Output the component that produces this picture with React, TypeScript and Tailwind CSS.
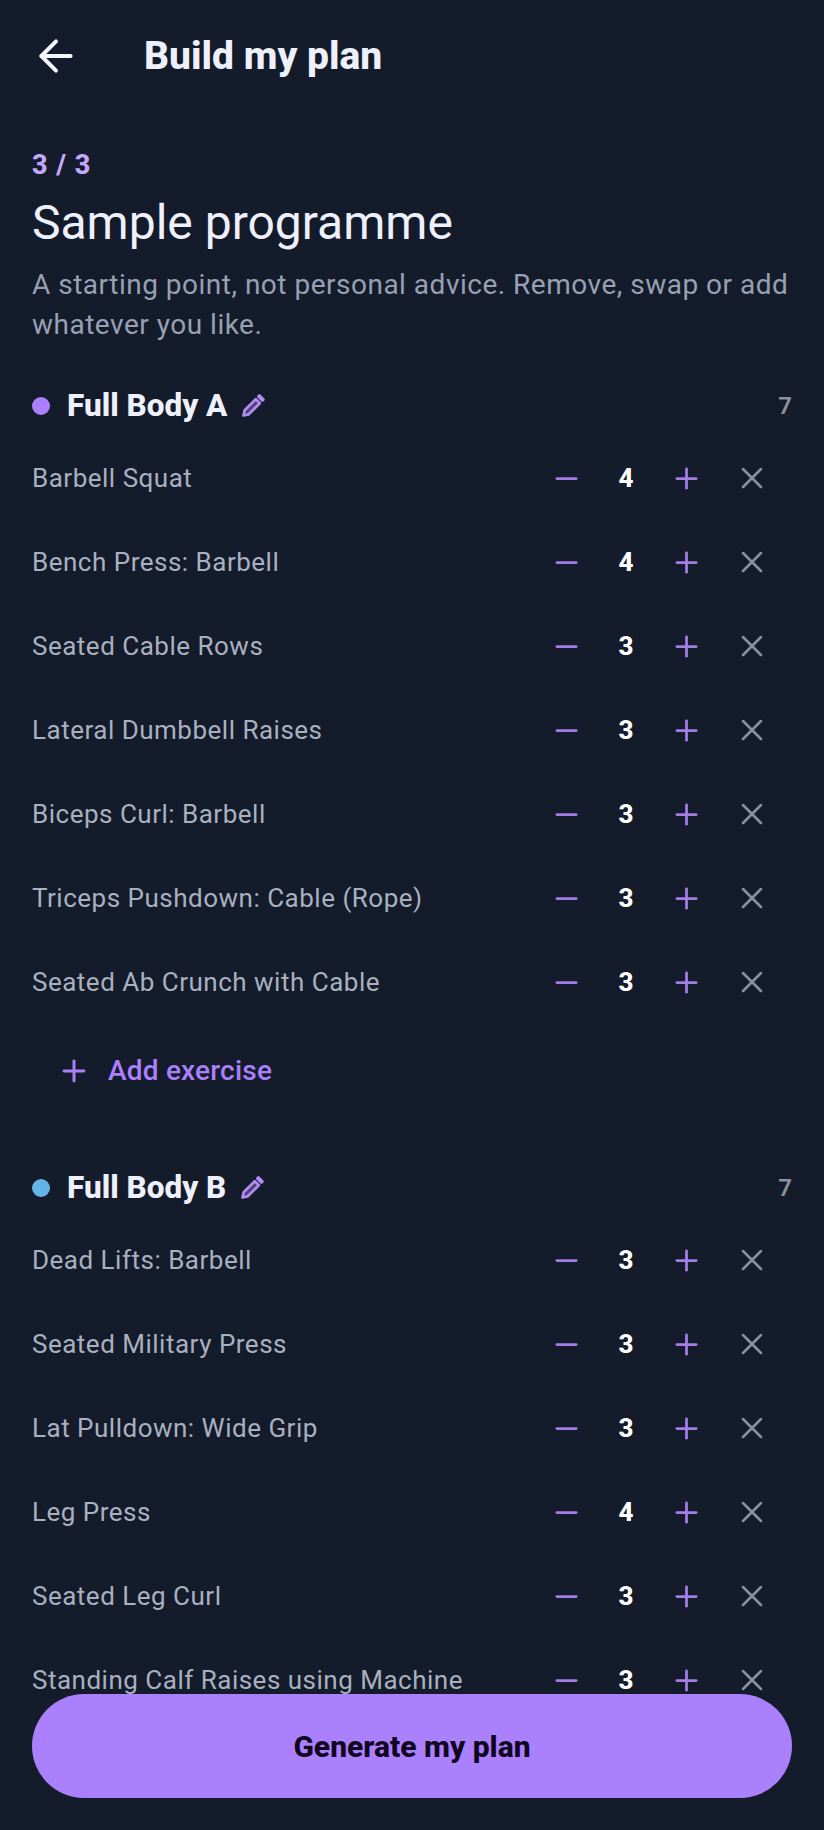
import { ArrowLeft, Minus, Plus, X } from 'lucide-react';

interface Exercise {
  name: string;
  sets: number;
}

interface Day {
  name: string;
  dot: string;
  exercises: Exercise[];
}

const days: Day[] = [
  {
    name: 'Full Body A',
    dot: 'bg-[#ab80fc]',
    exercises: [
      { name: 'Barbell Squat', sets: 4 },
      { name: 'Bench Press: Barbell', sets: 4 },
      { name: 'Seated Cable Rows', sets: 3 },
      { name: 'Lateral Dumbbell Raises', sets: 3 },
      { name: 'Biceps Curl: Barbell', sets: 3 },
      { name: 'Triceps Pushdown: Cable (Rope)', sets: 3 },
      { name: 'Seated Ab Crunch with Cable', sets: 3 },
    ],
  },
  {
    name: 'Full Body B',
    dot: 'bg-[#64b5e6]',
    exercises: [
      { name: 'Dead Lifts: Barbell', sets: 3 },
      { name: 'Seated Military Press', sets: 3 },
      { name: 'Lat Pulldown: Wide Grip', sets: 3 },
      { name: 'Leg Press', sets: 4 },
      { name: 'Seated Leg Curl', sets: 3 },
      { name: 'Standing Calf Raises using Machine', sets: 3 },
    ],
  },
];

const PencilIcon = () => (
  <svg width="26" height="26" viewBox="0 0 26 26" fill="#b08bf0" fillOpacity="0.35" stroke="#b08bf0" strokeWidth="2.8" strokeLinejoin="round" className="ml-[13px]">
    <path d="M3.5 22.5l1.2-5.2L15.8 6.2l4 4L8.7 21.3z" />
    <path d="M18.4 3.6l1-1 4 4-1 1z" fillOpacity="1" />
  </svg>
);

const ExerciseRow = ({ exercise }: { exercise: Exercise }) => (
  <div className="flex items-center h-[84px]">
    <span className="flex-1 text-[26px] tracking-[0.5px] text-[#a9b0bf]">{exercise.name}</span>
    <span className="w-[34px] h-[34px] flex items-center justify-center text-[#a47ee6] mr-[26px]">
      <Minus size={33} strokeWidth={2} />
    </span>
    <span className="w-[34px] text-center text-[26px] font-extrabold text-white mr-[26px]">{exercise.sets}</span>
    <span className="w-[34px] h-[34px] flex items-center justify-center text-[#a47ee6] mr-[29px]">
      <Plus size={33} strokeWidth={2} />
    </span>
    <span className="w-[40px] h-[40px] flex items-center justify-center text-[#8b919f] mr-[20px]">
      <X size={36} strokeWidth={1.7} />
    </span>
  </div>
);

const DaySection = ({ day, addExercise }: { day: Day; addExercise: boolean }) => (
  <section>
    <div className="flex items-center h-[36px]">
      <span className={`w-[18px] h-[18px] rounded-full ${day.dot}`} />
      <h3 className="ml-[17px] text-[31.5px] font-extrabold text-[#eef1fb]">{day.name}</h3>
      <PencilIcon />
      <span className="ml-auto text-[24px] font-semibold text-[#8b919f]">7</span>
    </div>
    <div className="mt-[12px]">
      {day.exercises.map((exercise) => (
        <ExerciseRow key={exercise.name} exercise={exercise} />
      ))}
    </div>
    {addExercise && (
      <div className="flex items-center h-[48px] mt-[23px] pl-[25px] text-[#ab80fc]">
        <Plus size={34} strokeWidth={2.1} />
        <span className="ml-[17px] text-[28px] tracking-[0.2px] font-medium">Add exercise</span>
      </div>
    )}
  </section>
);

export default function App() {
  return (
    <div className="relative w-[824px] h-[1830px] overflow-hidden bg-[#141b2b] font-['Roboto',sans-serif]">
      {/* Header */}
      <header className="flex items-center h-[40px] mt-[36px] pl-[31px] pt-0">
        <ArrowLeft size={50} strokeWidth={1.9} className="text-[#f5f7ff] shrink-0" />
        <h1 className="ml-[63px] text-[39px] font-extrabold text-[#eef1fb]">Build my plan</h1>
      </header>

      <main className="px-[32px] pt-[73px]">
        <p className="text-[27px] leading-[32px] font-extrabold tracking-[1px] text-[#c4a8fb]">3 / 3</p>
        <h2 className="mt-[14px] text-[48px] leading-[56px] text-[#eef1fb]">Sample programme</h2>
        <p className="mt-[14px] text-[28px] leading-[40px] tracking-[0.5px] text-[#98a0b2]">
          A starting point, not personal advice. Remove, swap or add whatever you like.
        </p>

        <div className="mt-[43px] flex flex-col gap-[75px]">
          {days.map((day, idx) => (
            <DaySection key={day.name} day={day} addExercise={idx === 0} />
          ))}
        </div>
      </main>

      {/* Sticky action */}
      <button className="absolute left-[32px] top-[1694px] w-[760px] h-[104px] rounded-full bg-[#ab80fc] text-[30px] font-extrabold text-[#10061f]">
        Generate my plan
      </button>
    </div>
  );
}
